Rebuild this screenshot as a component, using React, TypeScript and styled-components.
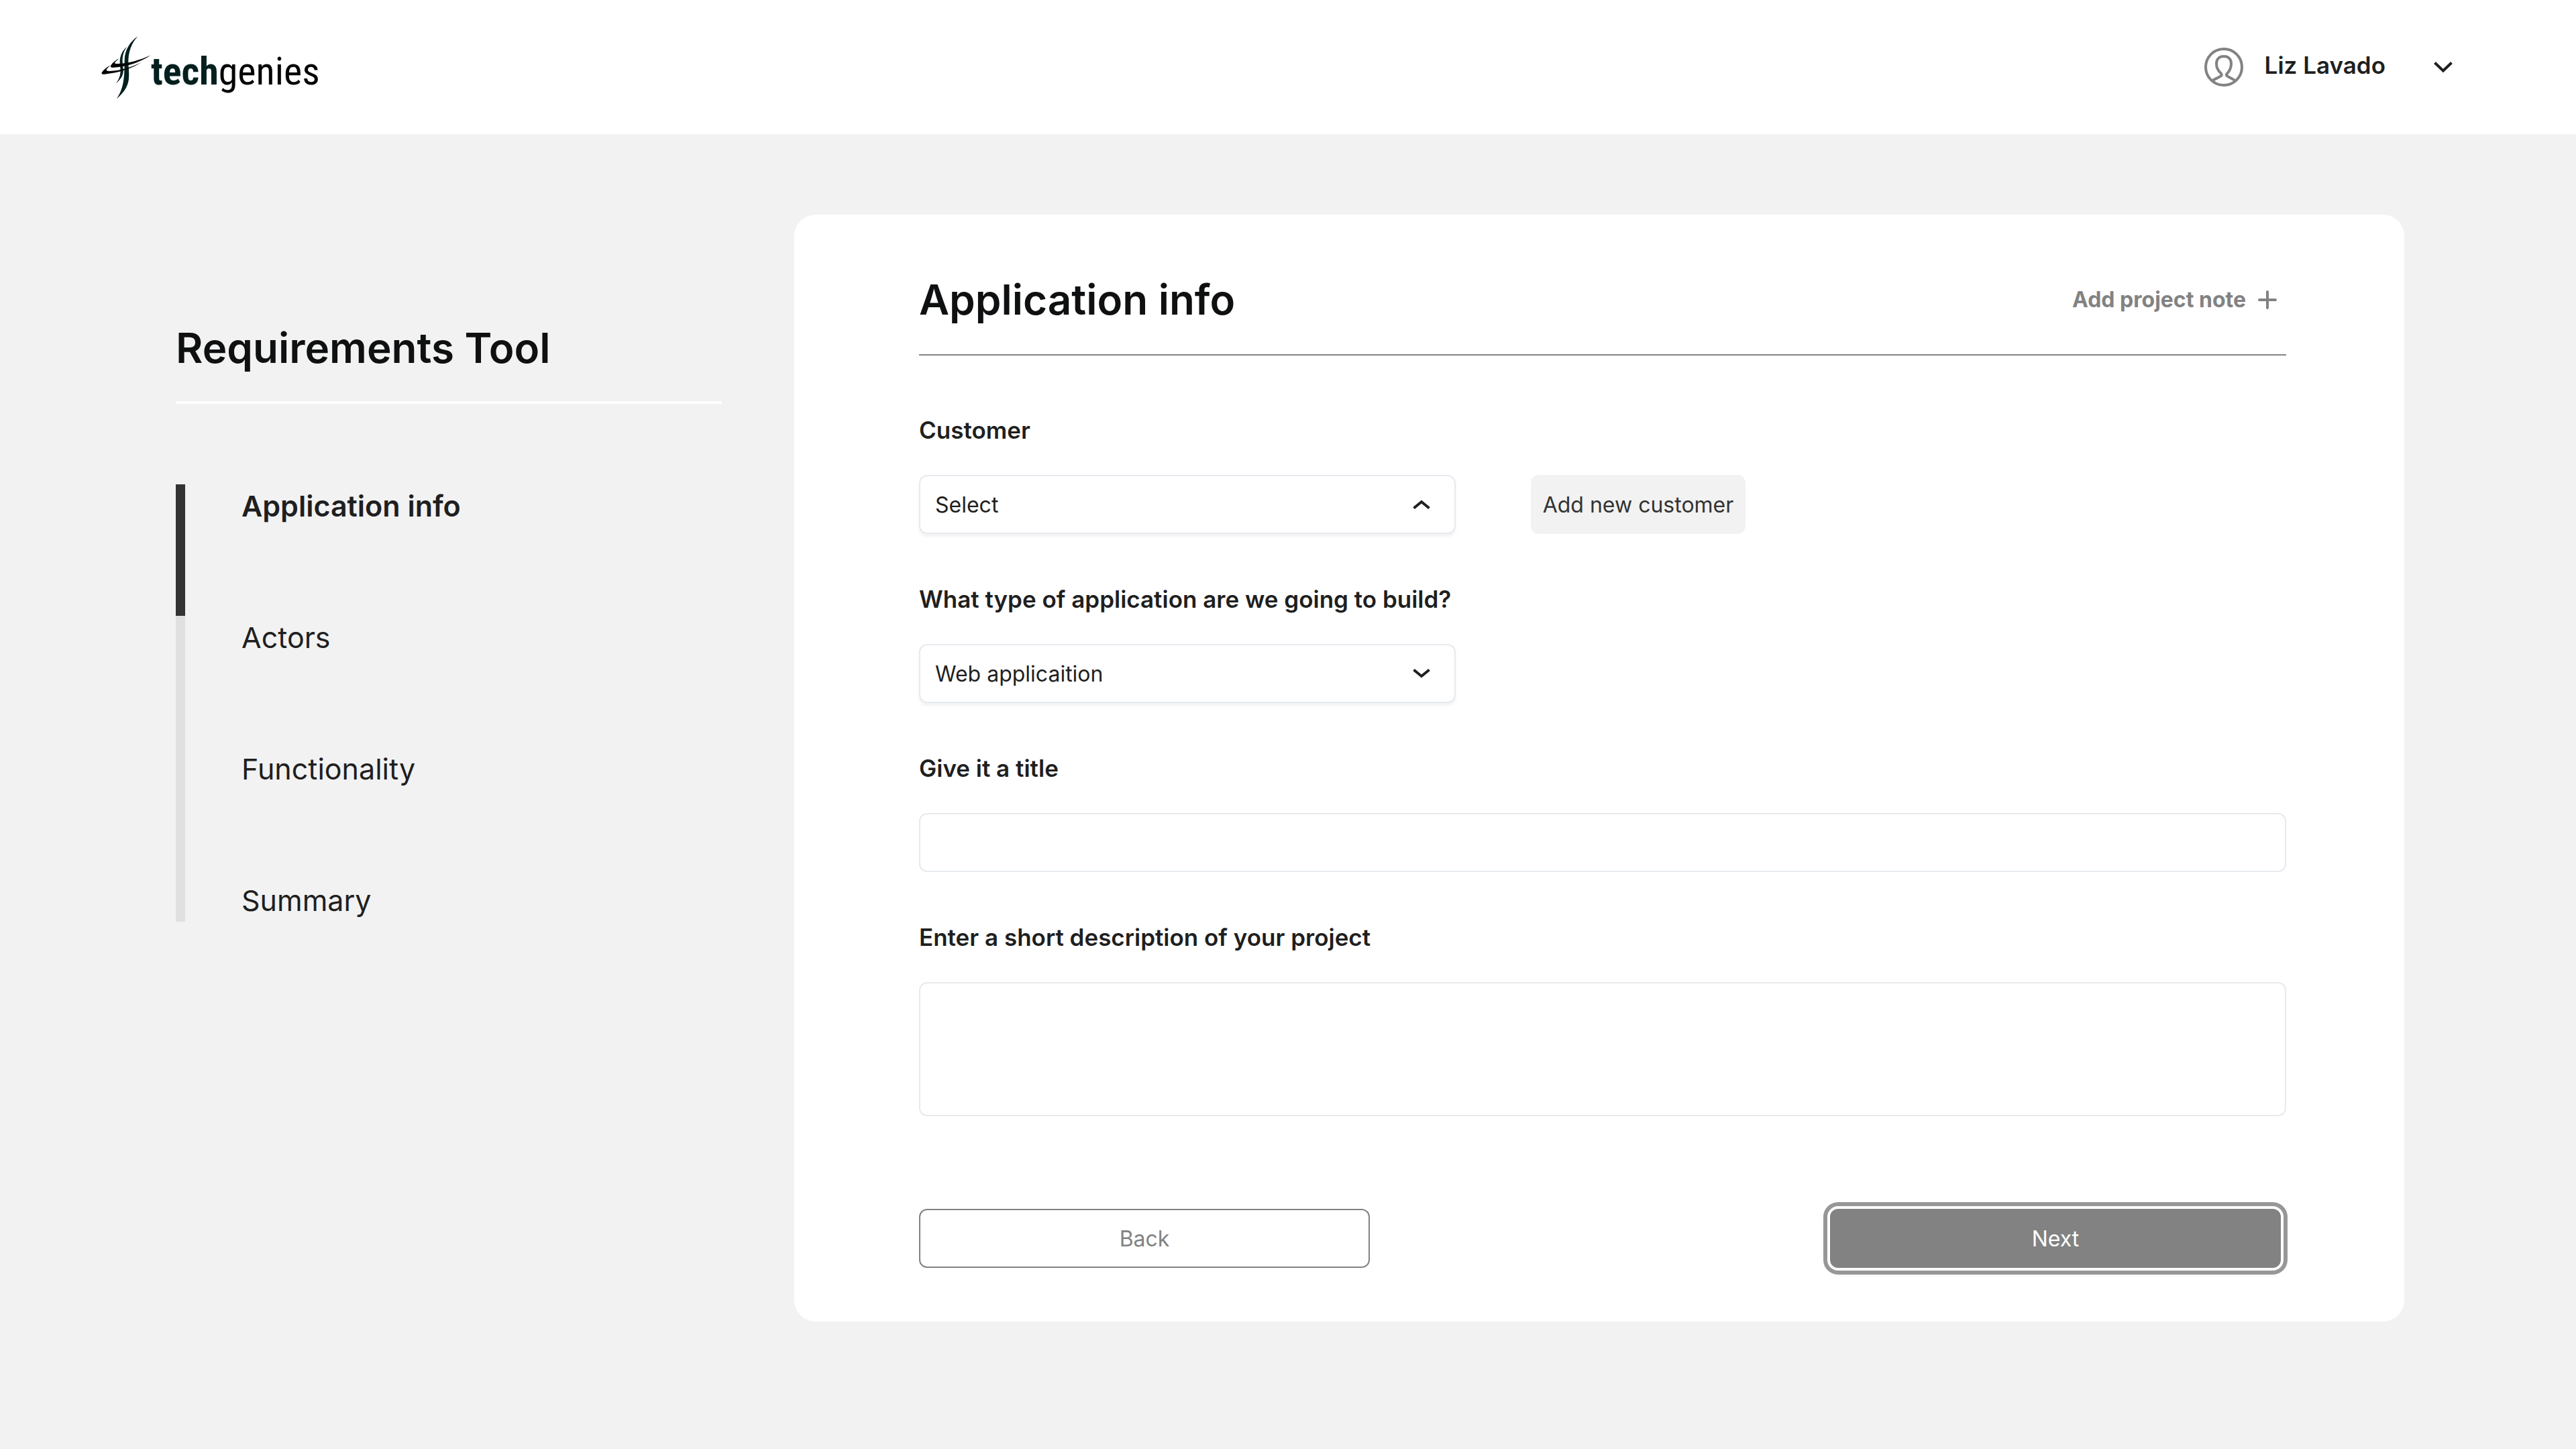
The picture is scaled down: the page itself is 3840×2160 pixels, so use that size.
import React from 'react';
import styled, { createGlobalStyle } from 'styled-components';

const color = {
  page: '#f2f2f2',
  white: '#ffffff',
  heading: '#0f1011',
  text: '#1f1f1f',
  dark: '#333333',
  muted: '#828282',
  ring: '#979797',
  track: '#e0e0e0',
  border: '#e7eaee',
};

const GlobalStyle = createGlobalStyle`
  *, *::before, *::after { box-sizing: border-box; }
  body {
    margin: 0;
    background: ${color.page};
    color: ${color.text};
    font-family: Inter, "Liberation Sans", sans-serif;
  }
  button, input, select, textarea { font: inherit; color: inherit; }
`;

const Header = styled.header`
  display: flex;
  justify-content: space-between;
  align-items: flex-start;
  height: 200px;
  padding: 54px 184px 0 151px;
  background: ${color.white};
`;

const Logo = styled.a`
  display: flex;
  align-items: flex-start;
  color: #050505;
  text-decoration: none;
`;

const LogoMark = styled.svg`
  width: 74px;
  height: 94px;
`;

const LogoName = styled.span`
  font-family: "Roboto Condensed", Roboto, "Liberation Sans", sans-serif;
  font-size: 58px;
  line-height: 104px;

  strong {
    font-weight: 700;
    color: #03201f;
  }
`;

const UserMenu = styled.button`
  display: flex;
  align-items: flex-start;
  margin-top: 17px;
  padding: 0;
  border: 0;
  background: none;
  cursor: pointer;
`;

const Avatar = styled.svg`
  width: 58px;
  height: 58px;
  margin-right: 32px;
`;

const UserName = styled.span`
  margin-right: 72px;
  font-size: 35px;
  font-weight: 600;
  line-height: 52px;
`;

const MenuArrow = styled.svg`
  width: 28px;
  height: 58px;
`;

const Main = styled.main`
  display: grid;
  grid-template-columns: 814px minmax(0, 1fr);
  align-items: start;
  gap: 108px;
  padding: 120px 256px 190px 262px;
`;

const Sidebar = styled.aside`
  padding-top: 159px;
`;

const ToolTitle = styled.h1`
  margin: 0 0 120px;
  padding-bottom: 39px;
  border-bottom: 4px solid ${color.white};
  color: ${color.heading};
  font-size: 62px;
  font-weight: 600;
  line-height: 80px;
`;

const Steps = styled.ol`
  margin: 0;
  padding: 0;
  list-style: none;
`;

const Step = styled.li<{ $active?: boolean }>`
  height: 196px;
  padding-left: 84px;
  border-left: 14px solid ${p => (p.$active ? color.dark : color.track)};
  font-size: 43px;
  font-weight: ${p => (p.$active ? 600 : 400)};
  line-height: 64px;

  &:last-child { height: 64px; }
`;

const StepLink = styled.a`
  color: inherit;
  text-decoration: none;
`;

const Card = styled.form`
  padding: 87px 176px 80px 186px;
  border-radius: 32px;
  background: ${color.white};
`;

const CardHeader = styled.div`
  display: flex;
  justify-content: space-between;
  align-items: center;
  margin-bottom: 90px;
  padding-bottom: 41px;
  border-bottom: 2px solid ${color.muted};
`;

const CardTitle = styled.h2`
  margin: 0;
  color: ${color.heading};
  font-size: 62px;
  font-weight: 600;
  line-height: 80px;
`;

const NoteButton = styled.button`
  display: flex;
  align-items: center;
  gap: 18px;
  padding: 0 14px 0 0;
  border: 0;
  background: none;
  color: ${color.muted};
  font-size: 32px;
  font-weight: 700;
  line-height: 40px;
  cursor: pointer;
`;

const PlusIcon = styled.svg`
  width: 28px;
  height: 28px;
`;

const Fields = styled.div`
  display: flex;
  flex-direction: column;
  gap: 76px;
`;

const Field = styled.div`
  display: flex;
  flex-direction: column;
  gap: 46px;
`;

const Label = styled.label`
  font-size: 35px;
  font-weight: 600;
  line-height: 42px;
`;

const Row = styled.div`
  display: flex;
  gap: 112px;
`;

const SelectBox = styled.div`
  display: grid;
  grid-template-columns: 1fr 64px;
  align-items: center;
  width: 800px;
`;

const Select = styled.select`
  grid-area: 1 / 1 / 2 / 3;
  height: 88px;
  padding: 0 64px 0 22px;
  border: 2px solid ${color.border};
  border-radius: 12px;
  background: ${color.white};
  box-shadow: 0 4px 4px rgba(0, 0, 0, 0.05);
  font-size: 32px;
  appearance: none;
`;

const SelectArrow = styled.svg`
  grid-area: 1 / 2;
  width: 26px;
  height: 14px;
  pointer-events: none;
`;

const AddButton = styled.button`
  width: 320px;
  height: 88px;
  padding: 0;
  border: 0;
  border-radius: 12px;
  background: ${color.page};
  color: ${color.dark};
  font-size: 32px;
  white-space: nowrap;
  cursor: pointer;
`;

const TextInput = styled.input`
  height: 88px;
  padding: 0 22px;
  border: 2px solid ${color.border};
  border-radius: 12px;
  background: ${color.white};
  font-size: 32px;
`;

const TextArea = styled.textarea`
  height: 200px;
  padding: 22px;
  border: 2px solid ${color.border};
  border-radius: 12px;
  background: ${color.white};
  font-size: 32px;
  resize: none;
`;

const Actions = styled.div`
  display: flex;
  justify-content: space-between;
  margin-top: 138px;
  padding-right: 8px;
`;

const ActionButton = styled.button<{ $primary?: boolean }>`
  width: 672px;
  height: 88px;
  border: 2px solid ${color.muted};
  border-radius: 12px;
  background: ${p => (p.$primary ? color.muted : color.white)};
  box-shadow: ${p =>
    p.$primary
      ? `0 0 0 4px ${color.white}, 0 0 0 10px ${color.ring}, 0 12px 4px rgba(0, 0, 0, 0.04)`
      : 'none'};
  color: ${p => (p.$primary ? color.white : color.muted)};
  font-size: 32px;
  cursor: pointer;
`;

const steps = ['Application info', 'Actors', 'Functionality', 'Summary'];

function Chevron({ up }: { up?: boolean }) {
  return (
    <SelectArrow viewBox="0 0 26 14" fill="none" stroke={color.text} strokeWidth="4" aria-hidden="true">
      <path d={up ? 'M1.5 12.5 13 3l11.5 9.5' : 'M1.5 1.5 13 11l11.5-9.5'} />
    </SelectArrow>
  );
}

export default function App() {
  return (
    <>
      <GlobalStyle />
      <Header>
        <Logo href="#" aria-label="techgenies">
          <LogoMark viewBox="94 72 222 282" aria-hidden="true">
            <path
              fill="#03201f"
              d="M257 73C222 96 199 134 198 178C197 215 198 240 194 265C190 300 178 330 162 352C190 329 211 301 216 270C220 240 216 215 215 190C214 145 228 104 257 73Z"
            />
            <path
              fill="#03201f"
              d="M208 120C188 136 177 160 177 187C177 210 183 228 177 248C173 262 168 272 160 282C178 268 190 252 192 232C194 215 189 205 189 186C188 160 194 140 208 120Z"
            />
            <path
              fill="#050505"
              d="M315 157C270 178 215 195 165 195C153 195 152 191 158 185L174 171C157 180 143 191 136 204C134 211 139 213 148 212C210 209 270 188 315 157Z"
            />
            <path
              fill="#050505"
              d="M276 187C235 209 180 227 130 228C116 228 115 224 120 217L134 202C117 211 103 223 96 235C94 242 100 243 108 242C175 236 232 216 276 187Z"
            />
          </LogoMark>
          <LogoName>
            <strong>tech</strong>genies
          </LogoName>
        </Logo>
        <UserMenu type="button">
          <Avatar viewBox="0 0 58 58" fill="none" stroke={color.muted} strokeWidth="4" aria-hidden="true">
            <circle cx="29" cy="29" r="27" />
            <path
              strokeLinejoin="round"
              d="M12 49 23.5 43Q27.5 41 24.5 38C20 34 18 30 18 24C18 17 22 13 29 13C36 13 40 17 40 24C40 30 38 34 34.5 38Q31 41 35 43L46 49"
            />
          </Avatar>
          <UserName>Liz Lavado</UserName>
          <MenuArrow viewBox="0 0 28 58" fill="none" stroke={color.text} strokeWidth="4" aria-hidden="true">
            <path d="M1.5 22.5 14 34.5l12.5-12" />
          </MenuArrow>
        </UserMenu>
      </Header>
      <Main>
        <Sidebar>
          <ToolTitle>Requirements Tool</ToolTitle>
          <nav aria-label="Steps">
            <Steps>
              {steps.map((step, i) => (
                <Step key={step} $active={i === 0}>
                  <StepLink href="#">{step}</StepLink>
                </Step>
              ))}
            </Steps>
          </nav>
        </Sidebar>
        <Card onSubmit={e => e.preventDefault()}>
          <CardHeader>
            <CardTitle>Application info</CardTitle>
            <NoteButton type="button">
              Add project note
              <PlusIcon viewBox="0 0 28 28" stroke={color.muted} strokeWidth="4" strokeLinecap="round" aria-hidden="true">
                <path d="M14 2v24M2 14h24" />
              </PlusIcon>
            </NoteButton>
          </CardHeader>
          <Fields>
            <Field>
              <Label htmlFor="customer">Customer</Label>
              <Row>
                <SelectBox>
                  <Select id="customer">
                    <option>Select</option>
                  </Select>
                  <Chevron up />
                </SelectBox>
                <AddButton type="button">Add new customer</AddButton>
              </Row>
            </Field>
            <Field>
              <Label htmlFor="app-type">What type of application are we going to build?</Label>
              <SelectBox>
                <Select id="app-type">
                  <option>Web applicaition</option>
                </Select>
                <Chevron />
              </SelectBox>
            </Field>
            <Field>
              <Label htmlFor="title">Give it a title</Label>
              <TextInput id="title" type="text" />
            </Field>
            <Field>
              <Label htmlFor="description">Enter a short description of your project</Label>
              <TextArea id="description" />
            </Field>
          </Fields>
          <Actions>
            <ActionButton type="button">Back</ActionButton>
            <ActionButton type="submit" $primary>
              Next
            </ActionButton>
          </Actions>
        </Card>
      </Main>
    </>
  );
}
